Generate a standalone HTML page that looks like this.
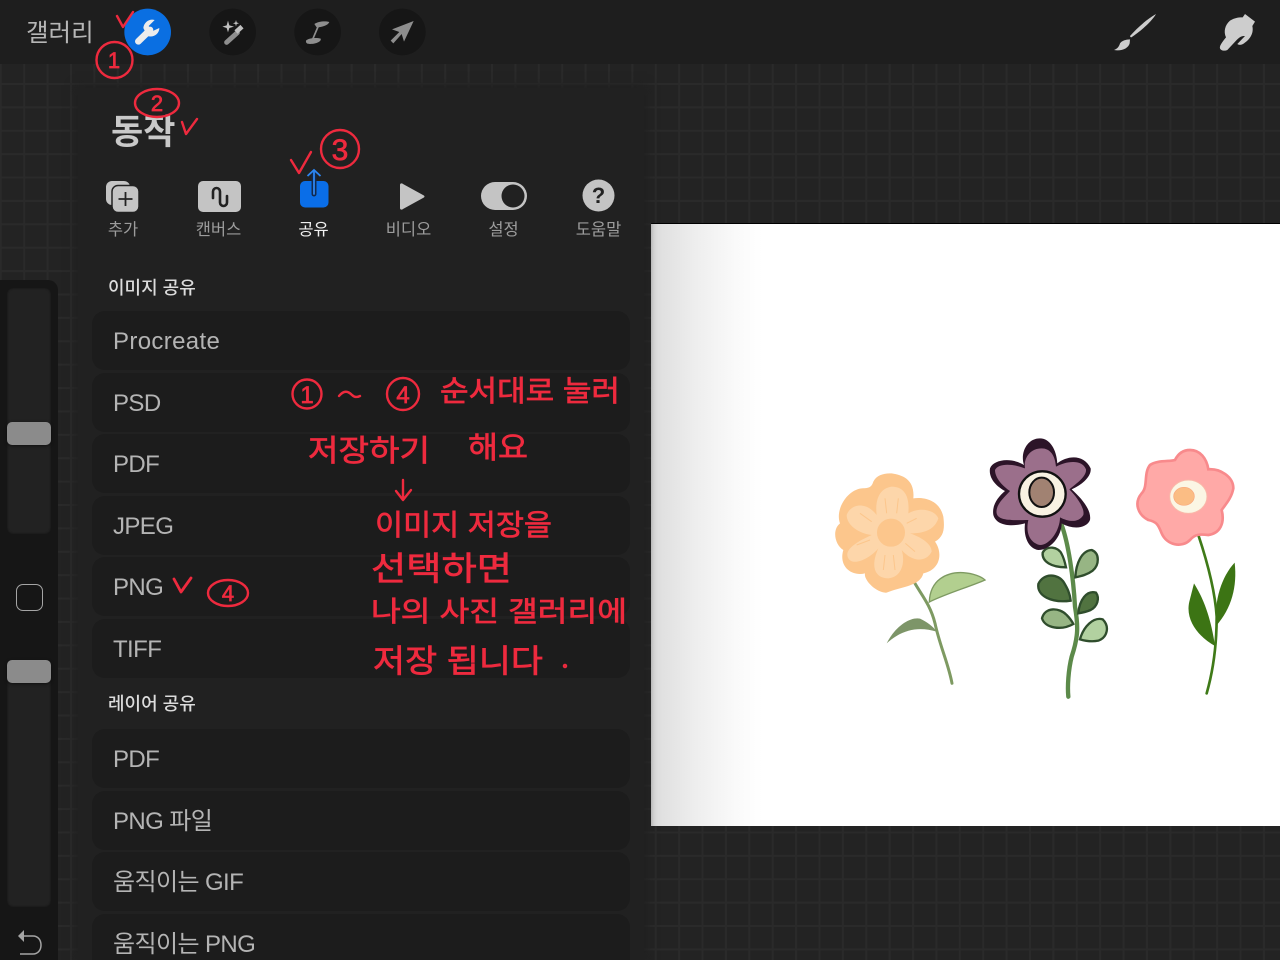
<!DOCTYPE html>
<html lang="ko"><head><meta charset="utf-8"><style>
*{box-sizing:border-box}
html,body{margin:0;padding:0;width:1280px;height:960px;overflow:hidden}
body{position:relative;background-color:#232323;
background-image:linear-gradient(90deg,#2a2a2a 0,#2a2a2a 2px,transparent 2px),linear-gradient(#2a2a2a 0,#2a2a2a 2px,transparent 2px);
background-size:23.4px 23.4px;background-position:-0.2px 12.8px;
font-family:"Liberation Sans","Noto Sans CJK KR",sans-serif}
.a{position:absolute}
#top{left:0;top:0;width:1280px;height:64px;background:#1e1e1e}
#gal{left:26px;top:16px;font-size:24.500px;line-height:36px;color:#b6b6b6}
#side{left:0;top:280px;width:58px;height:680px;background:#161616;border-top-right-radius:10px}
.tr{left:7px;width:44px;background:#222;border-radius:6px;box-shadow:inset 0 0 2px #111}
.th{left:7px;width:44px;height:23px;border-radius:5px;background:#8b8b8b;box-shadow:0 1px 3px #0008}
#sq{left:16px;top:584px;width:27px;height:27px;border:1.400px solid #a5a5a5;border-radius:7px}
#panel{left:78px;top:88px;width:566px;height:872px;background:#212121;box-shadow:0 0 9px 3px #212121}
#canvas{left:651px;top:223px;width:629px;height:603px;background:linear-gradient(90deg,#dcdcdc 0,#eee 45px,#fafafa 85px,#fff 112px);border-top:1px solid #000}
#title{left:111px;top:109px;font-size:35px;line-height:48px;font-weight:700;color:#c9c9c9}
.tab{width:100px;text-align:center;top:219px;font-size:16.500px;line-height:23px;color:#9c9c9c}
.hd{left:108px;font-size:18px;line-height:24px;font-weight:500;color:#dcdcdc}
.row{left:92px;width:538px;height:59px;background:#1c1c1c;border-radius:13px;padding-left:21px;font-size:24px;line-height:61px;color:#b4b4b4;letter-spacing:-.6px}
svg{position:absolute;overflow:visible}
</style></head><body>
<div class="a" id="canvas"></div>
<svg class="a" style="left:820px;top:430px" width="430" height="280" viewBox="0 0 1290 840">
<g fill="none" stroke-linecap="round">
<path d="M278 448C300 490 330 520 345 580C360 650 385 700 396 760" stroke="#7e9a62" stroke-width="9"/>
<path d="M725 285C745 340 760 440 765 530C775 590 775 620 755 680C745 720 742 770 745 800" stroke="#5c8a4a" stroke-width="13"/>
<path d="M1135 315C1160 390 1185 480 1190 560C1190 640 1180 720 1160 790" stroke="#3f7a18" stroke-width="8"/>
</g>
<path d="M328 516C330 450 380 425 430 428C460 430 485 440 495 450C450 470 380 490 328 516Z" fill="#b2cf8f" stroke="#7e9a62" stroke-width="4"/>
<path d="M200 640C225 590 270 560 300 566C320 575 340 590 350 605C300 590 250 595 200 640Z" fill="#7d9568"/>
<g stroke="#2f4d2c" stroke-width="7">
<path d="M738 412C695 412 665 395 668 368C680 345 715 350 725 372C732 385 735 398 738 412Z" fill="#b2d1a0"/>
<path d="M766 442C768 400 785 362 815 360C840 370 838 405 818 422C802 434 785 438 766 442Z" fill="#97b584"/>
<path d="M752 512C695 520 650 498 655 462C670 428 715 430 732 458C742 475 750 490 752 512Z" fill="#517340"/>
<path d="M775 550C778 510 800 480 828 488C840 505 832 530 812 540C798 546 788 548 775 550Z" fill="#517340"/>
<path d="M760 582C725 602 675 595 666 565C675 530 718 532 740 555C750 565 755 572 760 582Z" fill="#97b584"/>
<path d="M780 628C790 590 820 560 848 568C870 590 862 622 835 632C815 636 800 634 780 628Z" fill="#b2d1a0"/>
</g>
<path d="M215 130C250 135 285 150 280 205C320 200 360 215 370 260C375 300 370 320 345 335C370 370 360 420 310 430C300 470 240 470 200 488C170 490 130 450 135 430C95 440 55 410 70 360C45 345 35 300 60 280C45 240 80 180 125 175C150 175 155 170 160 155C170 135 190 130 215 130Z" fill="#fcc68c"/>
<path d="M215 170C250 170 270 195 265 250C300 230 345 240 355 265C345 295 320 310 270 310C300 320 335 340 335 365C320 395 280 400 245 360C255 390 250 440 205 445C165 445 150 410 175 355C150 385 100 410 85 385C70 360 110 335 155 315C115 310 80 285 80 255C90 225 135 210 170 255C165 215 175 175 215 170Z" fill="#fdd6aa"/>
<path d="M195 205L200 250M235 205L230 250M290 265L260 280M120 250L155 275M110 345L150 330M285 365L250 335M190 420L195 375M225 420L220 375" stroke="#fcc68c" stroke-width="3" fill="none"/>
<circle cx="213" cy="308" r="48" fill="#fcc68c" stroke="#fdd6aa" stroke-width="12"/>
<path d="M660 25C690 25 710 60 712 100C740 78 790 70 812 115C815 140 785 165 755 178C785 205 815 240 810 270C800 295 760 300 725 280C725 320 690 360 655 360C625 355 610 320 615 280C580 290 530 290 520 255C515 225 535 200 555 183C530 170 505 145 510 115C520 90 570 80 612 105C600 70 620 25 660 25Z" fill="#2c1428"/>
<path d="M665 55C690 55 705 75 708 110C735 95 785 85 798 118C800 140 770 160 748 178C770 200 795 235 790 255C775 280 745 275 720 262C720 300 690 345 660 345C635 340 615 315 625 270C590 270 535 275 530 250C525 225 555 200 570 183C550 170 525 145 525 120C535 100 575 100 615 115C610 85 630 55 665 55Z" fill="#9b6f8b"/>
<ellipse cx="667" cy="192" rx="70" ry="68" fill="#f8f2e2" stroke="#111" stroke-width="7"/>
<ellipse cx="665" cy="187" rx="37" ry="44" fill="#a18272" stroke="#111" stroke-width="6"/>
<path d="M1110 60C1140 60 1160 85 1165 118C1200 115 1240 140 1240 175C1235 205 1215 225 1205 240C1215 280 1200 310 1165 315C1140 312 1125 312 1110 330C1085 355 1040 345 1025 310C1015 285 1010 275 985 270C955 255 940 220 965 190C985 170 970 130 990 105C1010 90 1050 95 1065 90C1075 70 1090 60 1110 60Z" fill="#ffa9a7" stroke="#f88a8c" stroke-width="8"/>
<ellipse cx="1105" cy="200" rx="56" ry="50" fill="#fbf6e4" stroke="#f9b8a8" stroke-width="3"/>
<ellipse cx="1092" cy="199" rx="31" ry="27" fill="#fbbd84" stroke="#f9a87c" stroke-width="2"/>
<path d="M1244 398C1252 470 1235 535 1188 588C1182 510 1205 440 1244 398Z" fill="#3c7414"/>
<path d="M1122 460C1150 505 1172 560 1185 648C1135 620 1095 570 1108 515Z" fill="#3c7414"/>
</svg>
<div class="a" id="panel"></div>
<div class="a" id="top"></div>
<div class="a" id="gal">갤러리</div>
<svg class="a" style="left:0;top:0" width="440" height="64" viewBox="0 0 1320 192">
<circle cx="443" cy="96" r="70" fill="#0a6fe2"/>
<circle cx="698" cy="96" r="70" fill="#161616"/><circle cx="953" cy="96" r="70" fill="#161616"/><circle cx="1207" cy="96" r="70" fill="#161616"/>
<path d="M415 124L450 90" stroke="#ececec" stroke-width="20" stroke-linecap="round"/>
<path d="M430 84C432 65 450 55 464 60L446 78L456 94L478 84C478 102 460 114 442 108Z" fill="#ececec"/>
<path d="M680 127L712 98" stroke="#8e8e8e" stroke-width="15" stroke-linecap="round"/>
<path d="M708 96L726 80" stroke="#c0c0c0" stroke-width="14"/>
<path d="M684 62L688 76L702 80L688 84L684 97L680 84L667 80L680 76Z M708 60L710 67L717 70L710 72L708 79L706 72L699 70L706 67Z" fill="#c0c0c0"/>
<path d="M918 122C925 114 950 112 962 116C965 124 950 132 930 132C922 132 917 130 918 122Z M943 72C955 64 975 62 988 66C985 76 965 82 950 82Z" fill="#8e8e8e"/>
<path d="M955 78L938 118" stroke="#8e8e8e" stroke-width="5"/>
<path d="M1241 63L1212 125L1205 102L1180 130L1172 122L1198 96L1176 88Z" fill="#8e8e8e"/>
</svg>
<svg class="a" style="left:1090px;top:0" width="190" height="70" viewBox="0 0 570 210">
<path d="M198 42C185 65 150 95 124 112C122 112 120 110 120 108C140 85 170 58 198 42Z" fill="#cdcdcd"/>
<path d="M120 118C108 118 95 122 90 130C87 140 82 146 72 150C95 154 115 145 119 130Z" fill="#cdcdcd"/>
<path d="M465 42L495 65L487 78C492 100 480 118 462 130C455 135 447 136 442 132L465 108C455 108 450 110 440 120L412 150C405 154 392 152 390 145C388 138 395 128 408 112C400 95 405 75 420 62C435 52 450 52 458 52Z" fill="#cdcdcd"/>
</svg>
<div class="a" id="side"></div>
<div class="a tr" style="top:288px;height:246px"></div>
<div class="a th" style="top:422px"></div>
<div class="a" id="sq"></div>
<div class="a tr" style="top:660px;height:247px"></div>
<div class="a th" style="top:660px"></div>
<svg class="a" style="left:0;top:925px" width="58" height="35" viewBox="0 0 58 35">
<path d="M24 5L18 11L24 17Z" fill="#a5a5a5"/>
<path d="M23 11H33C38 11 41 15 41 20C41 25 38 29 33 29H20" fill="none" stroke="#a5a5a5" stroke-width="1.500"/>
</svg>
<div class="a" id="title">동작</div>
<svg class="a" style="left:0;top:160px" width="660" height="60" viewBox="0 160 660 60">
<rect x="106" y="181" width="24" height="24" rx="6" fill="#c4c4c4"/>
<rect x="112" y="185.500" width="27" height="27" rx="6" fill="#c4c4c4" stroke="#212121" stroke-width="1.500"/>
<path d="M125.500 192V206M118.500 199H132.500" stroke="#222" stroke-width="1.800"/>
<rect x="198" y="181" width="43" height="31" rx="5" fill="#c4c4c4"/>
<path d="M213 198V191.500a3.500 3.500 0 0 1 7 0V202.500a3.500 3.500 0 0 0 7 0V196" fill="none" stroke="#222" stroke-width="2.600" stroke-linecap="round"/>
<rect x="300" y="181" width="28.500" height="26.500" rx="5" fill="#0a6ee8"/>
<path d="M314 172V194" stroke="#11294d" stroke-width="5" stroke-linecap="round"/>
<path d="M314 172V194" stroke="#2d86f2" stroke-width="1.800" stroke-linecap="round"/>
<path d="M307.500 176L314 170L320.500 176" fill="none" stroke="#2d86f2" stroke-width="1.800"/>
<path d="M400 185C400 183 402 183 403 184L423 195C425 196 425 197 423 198L403 209C402 210 400 210 400 208Z" fill="#c4c4c4"/>
<rect x="481" y="182" width="46" height="28" rx="14" fill="#c4c4c4"/>
<circle cx="513" cy="196" r="11.500" fill="#212121"/>
<circle cx="598.500" cy="195.500" r="16" fill="#c4c4c4"/>
<text x="598.500" y="203" text-anchor="middle" font-size="22" font-weight="700" fill="#222" font-family="Liberation Sans">?</text>
</svg>
<div class="a tab" style="left:73px">추가</div>
<div class="a tab" style="left:168.500px">캔버스</div>
<div class="a tab" style="left:263.500px;color:#f0f0f0">공유</div>
<div class="a tab" style="left:358.500px">비디오</div>
<div class="a tab" style="left:453.500px">설정</div>
<div class="a tab" style="left:548.500px">도움말</div>
<div class="a hd" style="top:276px">이미지 공유</div>
<div class="a row" style="top:311px;letter-spacing:.35px">Procreate</div>
<div class="a row" style="top:372.500px">PSD</div>
<div class="a row" style="top:434px">PDF</div>
<div class="a row" style="top:495.500px">JPEG</div>
<div class="a row" style="top:557px">PNG</div>
<div class="a row" style="top:618.500px">TIFF</div>
<div class="a hd" style="top:692px">레이어 공유</div>
<div class="a row" style="top:729px">PDF</div>
<div class="a row" style="top:790.500px">PNG 파일</div>
<div class="a row" style="top:852px">움직이는 GIF</div>
<div class="a row" style="top:913.500px;height:46.500px;border-radius:13px 13px 0 0">움직이는 PNG</div>
<svg class="a" style="left:0;top:0" width="1280" height="960" viewBox="0 0 1280 960">
<g fill="none" stroke="#ee2a3e" stroke-width="2.400" stroke-linecap="round" stroke-linejoin="round">
<circle cx="114.500" cy="60" r="18"/>
<path d="M117 16L123 27L133 12"/>
<ellipse cx="157" cy="103" rx="22" ry="14"/>
<path d="M182 122L186 134L197 119"/>
<circle cx="340" cy="149" r="19"/>
<path d="M291 160L299 173L311 152"/>
<path d="M174 579L181 592L191 578" stroke-width="2.800"/>
<ellipse cx="228" cy="593" rx="20" ry="13"/>
<circle cx="307" cy="394" r="14.500"/>
<path d="M339 396C344 390 348 391 352 395C355 398 358 397 360 396"/>
<circle cx="403" cy="394" r="16"/>
<path d="M403 480V499M396 491L403 500L411 490"/>
<circle cx="565" cy="666" r="1" stroke-width="2.500"/>
</g>
<g fill="#ee2a3e" stroke="#ee2a3e" stroke-width=".7" font-family="Liberation Sans,Noto Sans CJK KR,sans-serif">
<text x="114" y="68" text-anchor="middle" font-size="22">1</text>
<text x="157" y="111" text-anchor="middle" font-size="22">2</text>
<text x="340" y="160" text-anchor="middle" font-size="30">3</text>
<text x="228" y="601" text-anchor="middle" font-size="22">4</text>
<text x="307" y="403" text-anchor="middle" font-size="24">1</text>
<text x="403" y="403" text-anchor="middle" font-size="24">4</text>
<text x="440" y="401" font-size="29" textLength="180" lengthAdjust="spacingAndGlyphs">순서대로 눌러</text>
<text x="308" y="461" font-size="30" textLength="122" lengthAdjust="spacingAndGlyphs">저장하기</text>
<text x="468" y="458" font-size="30" textLength="60" lengthAdjust="spacingAndGlyphs">해요</text>
<text x="375" y="535" font-size="29" textLength="177" lengthAdjust="spacingAndGlyphs">이미지 저장을</text>
<text x="371" y="580" font-size="33" textLength="141" lengthAdjust="spacingAndGlyphs">선택하면</text>
<text x="371" y="621" font-size="28" textLength="256" lengthAdjust="spacingAndGlyphs">나의 사진 갤러리에</text>
<text x="373" y="672" font-size="32" textLength="170" lengthAdjust="spacingAndGlyphs">저장 됩니다</text>
</g>
</svg>
</body></html>
